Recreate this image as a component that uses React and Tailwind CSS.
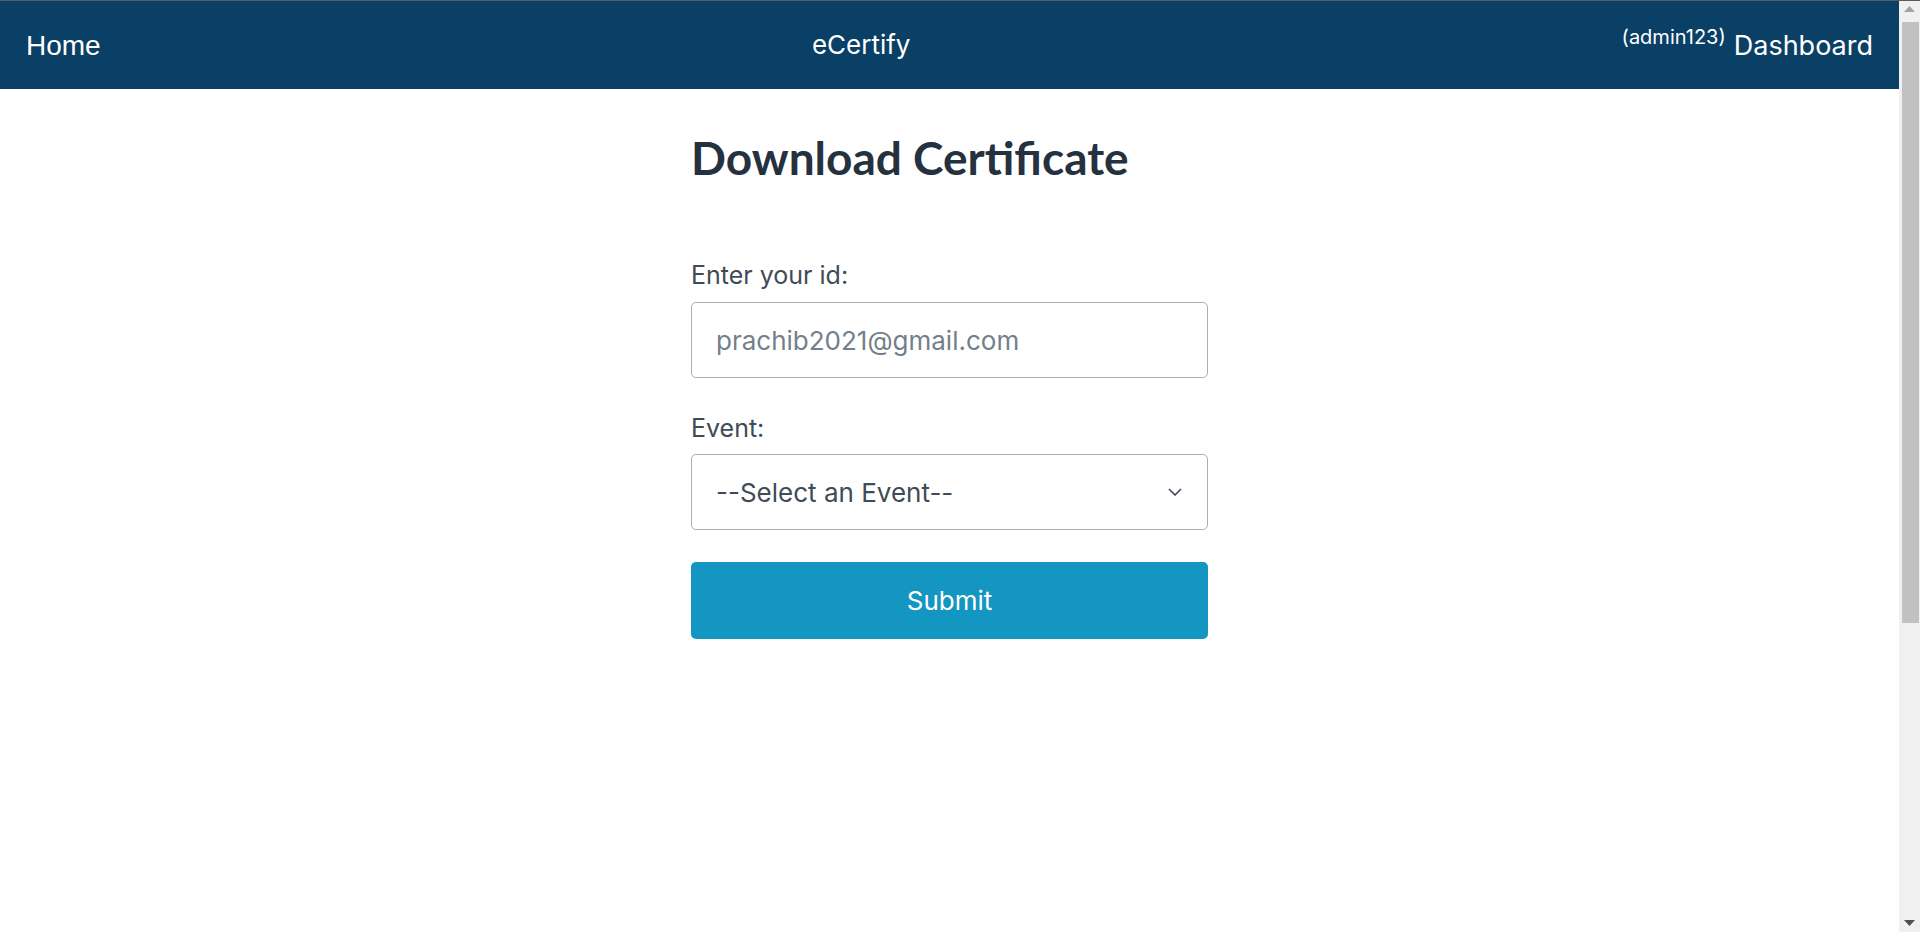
import React from "react";

function Scrollbar() {
  return (
    <aside className="w-[21px] shrink-0 bg-[#f0f0f0] flex flex-col items-center">
      <svg width="11" height="6" viewBox="0 0 11 6" className="mt-[5px]">
        <path d="M0 6L5.5 0L11 6Z" fill="#a3a3a3" />
      </svg>
      <div className="mt-[10px] ml-[1px] w-[17px] h-[601px] bg-[#c1c1c1]" />
      <div className="flex-1" />
      <svg width="11" height="6" viewBox="0 0 11 6" className="mb-[6px]">
        <path d="M0 0L5.5 6L11 0Z" fill="#505050" />
      </svg>
    </aside>
  );
}

export default function App() {
  return (
    <div className="h-screen box-border border-t border-[#5a5a5a] bg-white flex font-['Inter',sans-serif] overflow-hidden">
      <div className="flex-1 min-w-0">
        {/* Navbar */}
        <nav className="h-[88px] bg-[#0a3f66] px-[26px] flex items-center justify-between text-white">
          <a className="text-[28px] font-['Liberation_Sans',sans-serif] leading-none pt-[1px]">Home</a>
          <a className="text-[26px] leading-none">eCertify</a>
          <div className="flex items-start gap-[8px]">
            <span className="text-[20px] leading-none -mt-[5px]">(admin123)</span>
            <a className="text-[27px] leading-none">Dashboard</a>
          </div>
        </nav>

        {/* Form */}
        <main className="mx-auto w-[517px] pt-[41px]">
          <h1 className="text-[46px] leading-[56px] font-bold text-[#25313e] font-['Lato',sans-serif]">
            Download Certificate
          </h1>

          <form className="mt-[73px] flex flex-col">
            <label className="text-[25px] leading-[32px] text-[#3f4b57]">Enter your id:</label>
            <input
              type="text"
              placeholder="prachib2021@gmail.com"
              className="mt-[11px] h-[76px] rounded-[5px] border border-[#a7b0ba] pl-[24px] text-[26px] text-[#3f4b57] placeholder:text-[#737f8b] outline-none"
            />

            <label className="mt-[34px] text-[25px] leading-[32px] text-[#3f4b57]">Event:</label>
            <div className="mt-[10px] h-[76px] rounded-[5px] border border-[#a7b0ba] pl-[24px] pr-[25px] flex items-center justify-between text-[26px] text-[#3f4b57]">
              <span>--Select an Event--</span>
              <svg width="14" height="8" viewBox="0 0 14 8" fill="none" stroke="#3f4b57" strokeWidth="1.6">
                <path d="M1 1l6 6l6-6" />
              </svg>
            </div>

            <button
              type="button"
              className="mt-[32px] h-[77px] rounded-[5px] bg-[#1396c2] text-white text-[26px]"
            >
              Submit
            </button>
          </form>
        </main>
      </div>
      <Scrollbar />
    </div>
  );
}
